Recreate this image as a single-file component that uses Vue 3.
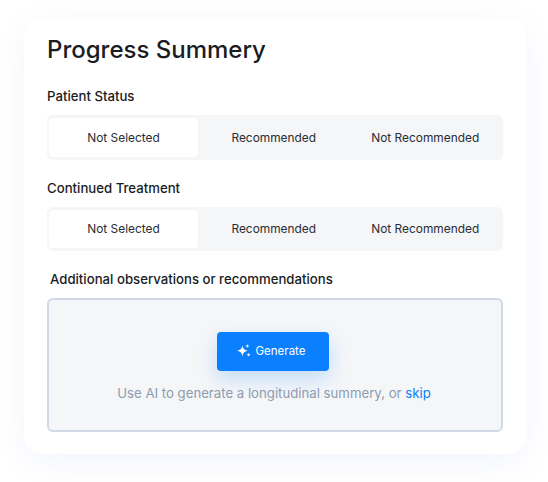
<script setup>
const options = ['Not Selected', 'Recommended', 'Not Recommended']
const groups = [
  { title: 'Patient Status', selected: 0 },
  { title: 'Continued Treatment', selected: 0 },
]
</script>

<template>
  <div class="page">
    <div class="card">
      <h1 class="title">Progress Summery</h1>

      <div v-for="group in groups" :key="group.title" class="group">
        <div class="label">{{ group.title }}</div>
        <div class="segments">
          <div
            v-for="(option, index) in options"
            :key="option"
            class="segment"
            :class="{ active: index === group.selected }"
          >
            {{ option }}
          </div>
        </div>
      </div>

      <div class="label notes_label">Additional observations or recommendations</div>
      <div class="notes">
        <button class="generate">
          <svg class="sparkle" width="14" height="14" viewBox="0 0 14 14" fill="#fff">
            <path d="M5.4 1.6 C5.9 4.6 7.2 6 10.6 6.8 C7.2 7.6 5.9 9 5.4 12.2 C4.9 9 3.6 7.6 .2 6.8 C3.6 6 4.9 4.6 5.4 1.6 Z" />
            <path d="M10.4 0 C10.6 1.2 11.1 1.7 12.6 2 C11.1 2.3 10.6 2.8 10.4 4 C10.2 2.8 9.7 2.3 8.2 2 C9.7 1.7 10.2 1.2 10.4 0 Z" />
            <path d="M11.6 8.8 C11.8 10 12.3 10.4 13.8 10.7 C12.3 11 11.8 11.4 11.6 12.8 C11.4 11.4 10.9 11 9.4 10.7 C10.9 10.4 11.4 10 11.6 8.8 Z" />
          </svg>
          Generate
        </button>
        <p class="hint">Use AI to generate a longitudinal summery, or <a class="skip">skip</a></p>
      </div>
    </div>
  </div>
</template>

<style>
html,
body {
  background: #fff;
}
</style>

<style scoped>
.page {
  width: 548px;
  height: 482px;
  padding: 18px 22px 28px 24px;
  box-sizing: border-box;
  font-family: Inter, "Liberation Sans", sans-serif;
  overflow: hidden;
}

.card {
  height: 436px;
  box-sizing: border-box;
  padding: 16px 23px 23px;
  background: #fff;
  border-radius: 18px;
  box-shadow: 0 8px 30px rgba(90, 110, 220, 0.07);
}

.title {
  margin: 0;
  font-size: 24px;
  line-height: 32px;
  font-weight: 500;
  color: #1a1c1f;
}

.group {
  margin-bottom: 18px;
}

.group:first-of-type {
  margin-top: 20px;
}

.label {
  font-size: 13.2px;
  line-height: 20px;
  font-weight: 500;
  color: #1a1c1f;
  margin-bottom: 9px;
}

.segments {
  display: grid;
  grid-template-columns: 149px 1fr 1fr;
  height: 44.5px;
  box-sizing: border-box;
  padding: 3px 2px;
  background: #f5f6f8;
  border-radius: 6px;
}

.segment {
  display: flex;
  align-items: center;
  justify-content: center;
  font-size: 11.9px;
  color: #2a2d33;
  border-radius: 4px;
}

.segment.active {
  background: #fff;
}

.group + .notes_label {
  margin-top: -0.5px;
}

.notes_label {
  margin-left: 3px;
}

.notes {
  height: 134px;
  box-sizing: border-box;
  padding-top: 32px;
  display: flex;
  flex-direction: column;
  align-items: center;
  background: #f5f6f8;
  border: 2px solid #d0d9e5;
  border-radius: 6px;
}

.generate {
  width: 112px;
  height: 39px;
  margin-right: 5px;
  padding: 0 3px 0 0;
  display: flex;
  align-items: center;
  justify-content: center;
  gap: 5px;
  border: none;
  border-radius: 4px;
  background: #0a80ff;
  color: #fff;
  font-family: inherit;
  font-size: 11.5px;
  box-shadow: 0 8px 20px rgba(10, 128, 255, 0.22);
}

.hint {
  margin: 12px 2px 0 0;
  font-size: 13.2px;
  line-height: 20px;
  color: #8c9cb0;
}

.skip {
  color: #0a80ff;
}
</style>
